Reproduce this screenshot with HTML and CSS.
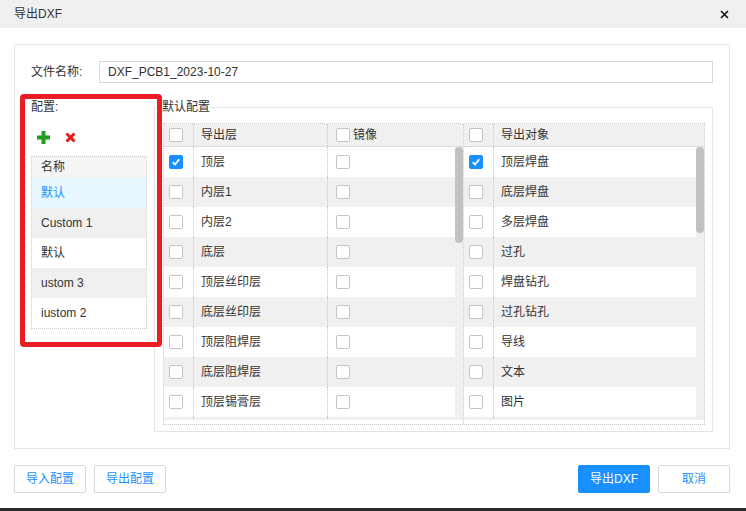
FILE: index.html
```html
<!DOCTYPE html>
<html lang="zh">
<head>
<meta charset="utf-8">
<title>导出DXF</title>
<link rel="stylesheet" href="styles.css">
</head>
<body>
<header class="titlebar">
  <span class="title">导出DXF</span>
  <svg class="close" width="9" height="9" viewBox="0 0 9 9"><path d="M1 1L8 8M8 1L1 8" stroke="#111" stroke-width="1.6" fill="none"/></svg>
</header>
<main class="panel">
  <div class="file-row">
    <label class="file-label">文件名称:</label>
    <input class="file-input" type="text" value="DXF_PCB1_2023-10-27" readonly>
  </div>
  <div class="main-row">
    <section class="config">
      <div class="config-title">配置:</div>
      <div class="config-tools">
        <svg class="ico-add" width="13" height="13" viewBox="0 0 13 13"><path d="M6.5 0V13M0 6.5H13" stroke="#1f9e1f" stroke-width="4" fill="none"/></svg>
        <svg class="ico-del" width="11" height="11" viewBox="0 0 11 11"><path d="M1.5 1.5L9.5 9.5M9.5 1.5L1.5 9.5" stroke="#e81b1b" stroke-width="3" fill="none"/></svg>
      </div>
      <div class="config-table">
        <div class="ct-head">名称</div>
        <div class="ct-row selected">默认</div>
        <div class="ct-row alt">Custom 1</div>
        <div class="ct-row">默认</div>
        <div class="ct-row alt">ustom 3</div>
        <div class="ct-row">iustom 2</div>
      </div>
    </section>
    <fieldset class="defaults">
      <legend>默认配置</legend>
      <div class="grids">
        <div class="grid grid-layers">
          <div class="g-head">
            <div class="cell c-chk"><span class="cb"></span></div>
            <div class="cell c-name">导出层</div>
            <div class="cell c-mirror"><span class="cb"></span>镜像</div>
          </div>
          <div class="g-body">
            <div class="g-rows">
              <div class="row"><div class="cell c-chk"><span class="cb on"><svg viewBox="0 0 14 14"><path d="M3.2 7.2L5.9 10L10.8 3.8" stroke="#fff" stroke-width="2" fill="none"/></svg></span></div><div class="cell c-name">顶层</div><div class="cell c-mirror"><span class="cb"></span></div></div>
              <div class="row"><div class="cell c-chk"><span class="cb"></span></div><div class="cell c-name">内层1</div><div class="cell c-mirror"><span class="cb"></span></div></div>
              <div class="row"><div class="cell c-chk"><span class="cb"></span></div><div class="cell c-name">内层2</div><div class="cell c-mirror"><span class="cb"></span></div></div>
              <div class="row"><div class="cell c-chk"><span class="cb"></span></div><div class="cell c-name">底层</div><div class="cell c-mirror"><span class="cb"></span></div></div>
              <div class="row"><div class="cell c-chk"><span class="cb"></span></div><div class="cell c-name">顶层丝印层</div><div class="cell c-mirror"><span class="cb"></span></div></div>
              <div class="row"><div class="cell c-chk"><span class="cb"></span></div><div class="cell c-name">底层丝印层</div><div class="cell c-mirror"><span class="cb"></span></div></div>
              <div class="row"><div class="cell c-chk"><span class="cb"></span></div><div class="cell c-name">顶层阻焊层</div><div class="cell c-mirror"><span class="cb"></span></div></div>
              <div class="row"><div class="cell c-chk"><span class="cb"></span></div><div class="cell c-name">底层阻焊层</div><div class="cell c-mirror"><span class="cb"></span></div></div>
              <div class="row"><div class="cell c-chk"><span class="cb"></span></div><div class="cell c-name">顶层锡膏层</div><div class="cell c-mirror"><span class="cb"></span></div></div>
              <div class="row"><div class="cell c-chk"></div><div class="cell c-name"></div><div class="cell c-mirror"></div></div>
            </div>
            <div class="track"><div class="thumb thumb-layers"></div></div>
          </div>
        </div>
        <div class="grid grid-objects">
          <div class="g-head">
            <div class="cell c-chk"><span class="cb"></span></div>
            <div class="cell c-name">导出对象</div>
          </div>
          <div class="g-body">
            <div class="g-rows">
              <div class="row"><div class="cell c-chk"><span class="cb on"><svg viewBox="0 0 14 14"><path d="M3.2 7.2L5.9 10L10.8 3.8" stroke="#fff" stroke-width="2" fill="none"/></svg></span></div><div class="cell c-name">顶层焊盘</div></div>
              <div class="row"><div class="cell c-chk"><span class="cb"></span></div><div class="cell c-name">底层焊盘</div></div>
              <div class="row"><div class="cell c-chk"><span class="cb"></span></div><div class="cell c-name">多层焊盘</div></div>
              <div class="row"><div class="cell c-chk"><span class="cb"></span></div><div class="cell c-name">过孔</div></div>
              <div class="row"><div class="cell c-chk"><span class="cb"></span></div><div class="cell c-name">焊盘钻孔</div></div>
              <div class="row"><div class="cell c-chk"><span class="cb"></span></div><div class="cell c-name">过孔钻孔</div></div>
              <div class="row"><div class="cell c-chk"><span class="cb"></span></div><div class="cell c-name">导线</div></div>
              <div class="row"><div class="cell c-chk"><span class="cb"></span></div><div class="cell c-name">文本</div></div>
              <div class="row"><div class="cell c-chk"><span class="cb"></span></div><div class="cell c-name">图片</div></div>
              <div class="row"><div class="cell c-chk"></div><div class="cell c-name"></div></div>
            </div>
            <div class="track"><div class="thumb thumb-objects"></div></div>
          </div>
        </div>
      </div>
    </fieldset>
  </div>
</main>
<footer class="footer">
  <button class="btn">导入配置</button>
  <button class="btn">导出配置</button>
  <span class="spacer"></span>
  <button class="btn primary">导出DXF</button>
  <button class="btn">取消</button>
</footer>
<div class="edge"></div>
<div class="annotation"></div>
</body>
</html>
```

FILE: styles.css
```css
* { box-sizing: border-box; }

body {
  margin: 0;
  width: 746px;
  height: 511px;
  position: relative;
  overflow: hidden;
  display: flex;
  flex-direction: column;
  background: #fff;
  color: #333;
  font: 12px/16px "Liberation Sans", "Noto Sans CJK SC", sans-serif;
}

.titlebar {
  height: 28px;
  flex: none;
  background: #f0f0f0;
  display: flex;
  align-items: center;
  justify-content: space-between;
  padding: 0 17px 0 14px;
}

.close { display: block; }

.panel {
  flex: none;
  margin: 16px 16px 0 14px;
  height: 405px;
  border: 1px solid #e6e6e6;
  padding: 16px;
  display: flex;
  flex-direction: column;
}

.file-row {
  display: flex;
  align-items: center;
  height: 22px;
}

.file-label { width: 68px; flex: none; }

.file-input {
  flex: 1;
  min-width: 0;
  height: 22px;
  margin: 0;
  border: 1px solid #d9d9d9;
  border-radius: 0;
  padding: 0 8px;
  font: inherit;
  color: #333;
  background: #fff;
  outline: none;
}

.main-row {
  display: flex;
  margin-top: 16px;
  flex: 1;
  min-height: 0;
}

.config { width: 123px; flex: none; }

.config-title { height: 16px; }

.config-tools {
  display: flex;
  align-items: center;
  height: 20px;
  margin-top: 12px;
}

.ico-add { margin-left: 6px; display: block; }
.ico-del { margin-left: 15px; display: block; }

.config-table {
  margin-top: 9px;
  width: 116px;
  border: 1px dotted #c8c8c8;
}

.ct-head {
  height: 21px;
  line-height: 21px;
  padding-left: 9px;
  background: #f5f5f5;
}

.ct-row {
  height: 30px;
  line-height: 30px;
  padding-left: 9px;
}

.ct-row.alt { background: #f0f0f0; }
.ct-row.selected { background: #e6f7ff; color: #1890ff; }

.defaults {
  flex: 1;
  min-width: 0;
  margin: 0;
  border: 1px solid #e6e6e6;
  padding: 8px 7px 6px 8px;
}

.defaults legend {
  padding: 0;
  margin-left: -1px;
  line-height: 16px;
}

.grids {
  display: flex;
  border: 1px dotted #c8c8c8;
}

.grid {
  display: flex;
  flex-direction: column;
  padding-bottom: 4px;
}

.grid-layers { width: 300px; flex: none; border-right: 1px dotted #c8c8c8; }
.grid-objects { flex: 1; min-width: 0; }

.g-head {
  display: flex;
  height: 23px;
  background: #f0f0f0;
  border-bottom: 1px dotted #c8c8c8;
}

.g-body {
  display: flex;
  height: 273px;
}

.g-rows { flex: 1; overflow: hidden; }

.row { display: flex; height: 30px; flex: none; }
.row:nth-child(even) { background: #f0f0f0; }

.cell {
  display: flex;
  align-items: center;
  flex: none;
  white-space: nowrap;
}

.c-chk {
  width: 30px;
  padding-left: 5px;
  border-right: 1px dotted #c8c8c8;
}

.c-name {
  width: 134px;
  padding-left: 7px;
  border-right: 1px dotted #c8c8c8;
}

.grid-objects .c-name { flex: 1; width: auto; border-right: none; }

.c-mirror {
  flex: 1;
  padding-left: 8px;
  gap: 3px;
}

.cb {
  width: 14px;
  height: 14px;
  flex: none;
  display: inline-flex;
  border: 1px solid #c4c4c4;
  border-radius: 2px;
  background: #fff;
}

.cb.on { background: #1890ff; border-color: #1890ff; }
.cb svg { width: 12px; height: 12px; }

.track {
  width: 8px;
  flex: none;
  background: #f0f0f0;
}

.thumb {
  width: 8px;
  border-radius: 4px;
  background: #c1c1c1;
}

.thumb-layers { height: 96px; }
.thumb-objects { height: 86px; }

.footer {
  flex: none;
  display: flex;
  gap: 8px;
  margin: 16px 16px 0 14px;
}

.spacer { flex: 1; }

.btn {
  width: 72px;
  height: 28px;
  margin: 0;
  padding: 0;
  border: 1px solid #d9d9d9;
  border-radius: 2px;
  background: #fff;
  color: #1890ff;
  font: inherit;
}

.btn.primary { background: #1890ff; border-color: #1890ff; color: #fff; }

.edge {
  margin-top: auto;
  height: 3px;
  flex: none;
  background: #2b2b2b;
}

.annotation {
  position: absolute;
  left: 20px;
  top: 94px;
  width: 142px;
  height: 253px;
  border: 5px solid #ea1d25;
  border-radius: 4px;
  pointer-events: none;
}
```
